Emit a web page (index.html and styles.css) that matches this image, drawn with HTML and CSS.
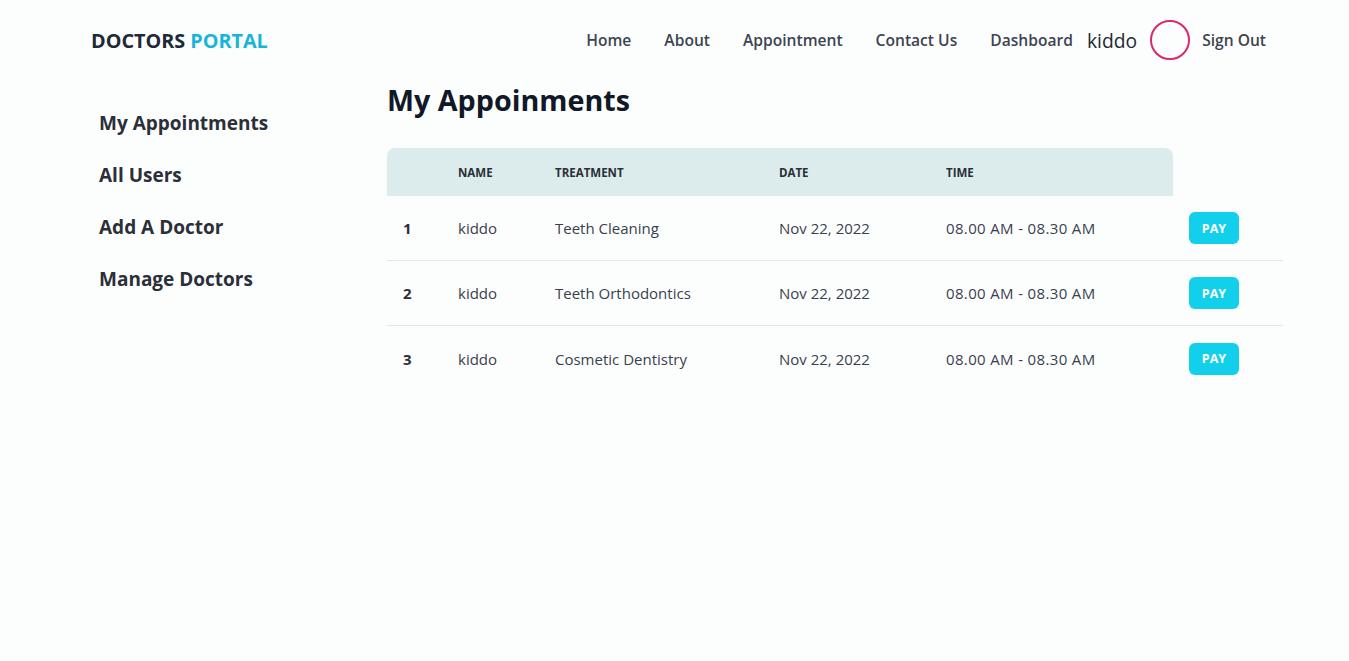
FILE: index.html
```html
<!DOCTYPE html>
<html lang="en">
<head>
<meta charset="utf-8">
<title>Doctors Portal</title>
<link rel="stylesheet" href="styles.css">
</head>
<body>
<header class="navbar">
  <a class="logo" href="#">DOCTORS <span class="accent">PORTAL</span></a>
  <nav class="menu">
    <a href="#">Home</a>
    <a href="#">About</a>
    <a href="#">Appointment</a>
    <a href="#">Contact Us</a>
    <a href="#">Dashboard</a>
    <span class="user">kiddo</span>
    <span class="avatar"></span>
    <a href="#" class="signout">Sign Out</a>
  </nav>
</header>
<div class="layout">
  <aside class="sidebar">
    <a href="#">My Appointments</a>
    <a href="#">All Users</a>
    <a href="#">Add A Doctor</a>
    <a href="#">Manage Doctors</a>
  </aside>
  <main class="main">
    <h1 class="title">My Appoinments</h1>
    <table class="table">
      <thead>
        <tr>
          <th class="c-num"></th>
          <th class="c-name">Name</th>
          <th class="c-treat">Treatment</th>
          <th class="c-date">Date</th>
          <th class="c-time">Time</th>
        </tr>
      </thead>
      <tbody>
        <tr>
          <td class="num">1</td><td>kiddo</td><td>Teeth Cleaning</td><td>Nov 22, 2022</td><td class="time">08.00 AM - 08.30 AM</td><td class="c-pay"><button class="pay">PAY</button></td>
        </tr>
        <tr>
          <td class="num">2</td><td>kiddo</td><td>Teeth Orthodontics</td><td>Nov 22, 2022</td><td class="time">08.00 AM - 08.30 AM</td><td class="c-pay"><button class="pay">PAY</button></td>
        </tr>
        <tr class="last">
          <td class="num">3</td><td>kiddo</td><td>Cosmetic Dentistry</td><td>Nov 22, 2022</td><td class="time">08.00 AM - 08.30 AM</td><td class="c-pay"><button class="pay">PAY</button></td>
        </tr>
      </tbody>
    </table>
  </main>
</div>
</body>
</html>
```

FILE: styles.css
```css
* { box-sizing: border-box; }
html, body { margin: 0; padding: 0; }
body {
  background: #fcfefe;
  font-family: "Open Sans", "Noto Sans", sans-serif;
  color: #3d4451;
  width: 1349px;
  min-height: 661px;
}
a { text-decoration: none; color: inherit; }

.navbar {
  height: 80px;
  display: flex;
  align-items: center;
  justify-content: space-between;
  padding: 0 83px 0 91px;
}
.logo {
  font-size: 19.8px;
  font-weight: 700;
  color: #1f2937;
}
.logo .accent { color: #19b5d8; }
.menu {
  display: flex;
  align-items: center;
  font-size: 15.6px;
  font-weight: 600;
  color: #3d4451;
}
.menu a { padding: 0 16.5px; }
.menu .user {
  font-size: 19.3px;
  font-weight: 400;
  color: #222831;
  margin-left: -2.5px;
}
.avatar {
  width: 40px;
  height: 40px;
  border: 2px solid #d9286e;
  border-radius: 50%;
  margin-left: 13px;
}
.menu .signout { padding: 0 0 0 12px; }

.layout {
  display: grid;
  grid-template-columns: 387px 896px;
}
.sidebar {
  display: flex;
  flex-direction: column;
  gap: 26px;
  padding: 30px 0 0 99px;
  font-size: 19px;
  font-weight: 700;
  color: #2a2f38;
}
.sidebar a { line-height: 26px; }

.title {
  margin: 0;
  font-size: 28.7px;
  font-weight: 700;
  color: #111827;
  line-height: 40px;
}
.table {
  margin-top: 28px;
  border-collapse: separate;
  border-spacing: 0;
  width: 896px;
  font-size: 15px;
  table-layout: fixed;
}
.table th {
  background: #dcecec;
  height: 48px;
  text-align: left;
  font-size: 11.5px;
  font-weight: 700;
  text-transform: uppercase;
  color: #2a2f38;
  padding: 0 16px;
}
.table th:first-child { border-top-left-radius: 8px; }
.table th:last-child { border-top-right-radius: 8px; }
.c-num { width: 55px; }
.c-name { width: 97px; }
.c-treat { width: 224px; }
.c-date { width: 167px; }
.c-time { width: 243px; }
.table td {
  height: 65px;
  padding: 0 16px;
  color: #3a3f4e;
  border-bottom: 1px solid #dcecec;
}
.table td.time { letter-spacing: 0.35px; }
.table tr.last td { border-bottom: none; }
.table td.num { font-weight: 700; color: #2a2f38; }
.pay {
  width: 50px;
  height: 32px;
  border: none;
  border-radius: 6px;
  background: #12cfeb;
  color: #fff;
  font-family: inherit;
  font-weight: 700;
  font-size: 12.5px;
  padding: 0;
}
```
